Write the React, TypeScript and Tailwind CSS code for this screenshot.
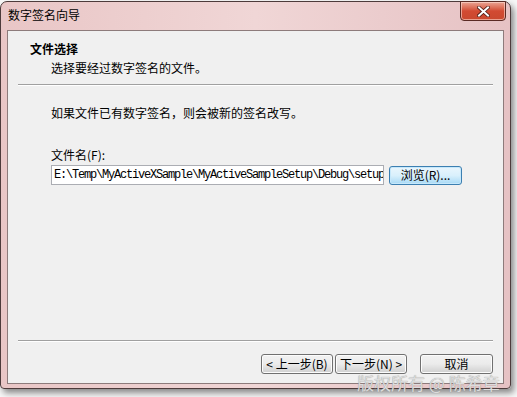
import React from 'react'

const cjk = { fontFamily: '"Noto Sans CJK SC", "Noto Sans", sans-serif' }

function WinButton({ children, className = '' }: { children: React.ReactNode; className?: string }) {
    return (
        <button
            className={`h-[20px] rounded-[3px] border border-[#707070] bg-gradient-to-b from-[#f2f2f2] via-[#ebebeb] to-[#cfcfcf] text-[12px] leading-none text-black shadow-[inset_0_0_0_1px_#fcfcfc] ${className}`}
        >
            {children}
        </button>
    )
}

export default function App() {
    return (
        <div className="relative w-[517px] h-[397px] bg-[#f7f7f7] overflow-hidden" style={cjk}>
            {/* window frame */}
            <div className="relative mt-[1px] w-[511px] h-[388px] rounded-t-[7px] rounded-b-[4px] border border-[#4d3b3b] bg-gradient-to-r from-[#e9c6c6] via-[#f0d6d6] to-[#e6c2c4] shadow-[3px_4px_6px_rgba(0,0,0,0.45)] flex flex-col">
                {/* title bar */}
                <div className="h-[28px] flex items-start pl-[7px] pt-[4px]">
                    <span className="text-[12px] leading-[18px] text-black">数字签名向导</span>
                </div>

                {/* close button */}
                <div className="absolute right-[4px] top-[-1px] w-[46px] h-[20px] rounded-b-[4px] border border-[#5a2a24] bg-gradient-to-b from-[#e9a494] via-[#d24a32] to-[#c9482f] flex items-center justify-center shadow-[inset_0_0_0_1px_rgba(255,220,210,0.6)]">
                    <svg width="13" height="11" viewBox="0 0 13 11">
                        <path d="M2 1.5 L11 9.5 M11 1.5 L2 9.5" stroke="#4a1a14" strokeWidth="3.6" strokeLinecap="square" />
                        <path d="M2 1.5 L11 9.5 M11 1.5 L2 9.5" stroke="#ffffff" strokeWidth="2" strokeLinecap="square" />
                    </svg>
                </div>

                {/* client area */}
                <div className="mx-[6px] mb-[4px] flex-1 border border-[#8d7b7b] bg-[#f0f0f0] flex flex-col">
                    {/* header */}
                    <div className="h-[53px] pl-[22px] pt-[11px]">
                        <div className="text-[12px] leading-[14px] font-bold text-black">文件选择</div>
                        <div className="mt-[5px] pl-[21px] text-[12px] leading-[14px] text-black">选择要经过数字签名的文件。</div>
                    </div>
                    <div className="mx-[10px] border-t border-[#a0a0a0] border-b border-b-white" />

                    {/* body */}
                    <div className="flex-1 pl-[43px] pt-[20px]">
                        <div className="text-[12px] leading-[14px] text-black">如果文件已有数字签名，则会被新的签名改写。</div>
                        <div className="mt-[28px] text-[12px] leading-[14px] text-black">文件名(F):</div>
                        <div className="mt-[3px] flex items-center">
                            <div className="w-[333px] h-[20px] border border-[#abadb3] bg-white overflow-hidden flex items-center pl-[2px]">
                                <span
                                    className="whitespace-nowrap text-[12px] tracking-[-1.2px] text-black"
                                    style={{ fontFamily: '"Liberation Mono", monospace' }}
                                >
                                    E:\Temp\MyActiveXSample\MyActiveSampleSetup\Debug\setup
                                </span>
                            </div>
                            <button className="ml-[5px] h-[19px] w-[73px] rounded-[3px] border border-[#3c7fb1] bg-gradient-to-b from-[#eaf6fd] via-[#d9f0fc] to-[#a7d9f5] text-[12px] leading-none text-black shadow-[inset_0_0_0_1px_#c6e8fb]">
                                浏览(R)...
                            </button>
                        </div>
                    </div>

                    {/* footer */}
                    <div className="mx-[10px] border-t border-[#a0a0a0] border-b border-b-white" />
                    <div className="h-[41px] flex items-start pt-[12px] pl-[253px]">
                        <WinButton className="w-[72px]">&lt; 上一步(B)</WinButton>
                        <WinButton className="ml-[2px] w-[72px]">下一步(N) &gt;</WinButton>
                        <WinButton className="ml-[13px] w-[73px]">取消</WinButton>
                    </div>
                </div>
            </div>

            {/* watermark */}
            <div
                className="absolute left-[357px] top-[373px] text-[17px] leading-[20px] text-[#dcdcdc] whitespace-nowrap"
                style={{ textShadow: '0 0 1px #8a8a8a' }}
            >
                版权所有 @ 陈希章
            </div>
        </div>
    )
}
